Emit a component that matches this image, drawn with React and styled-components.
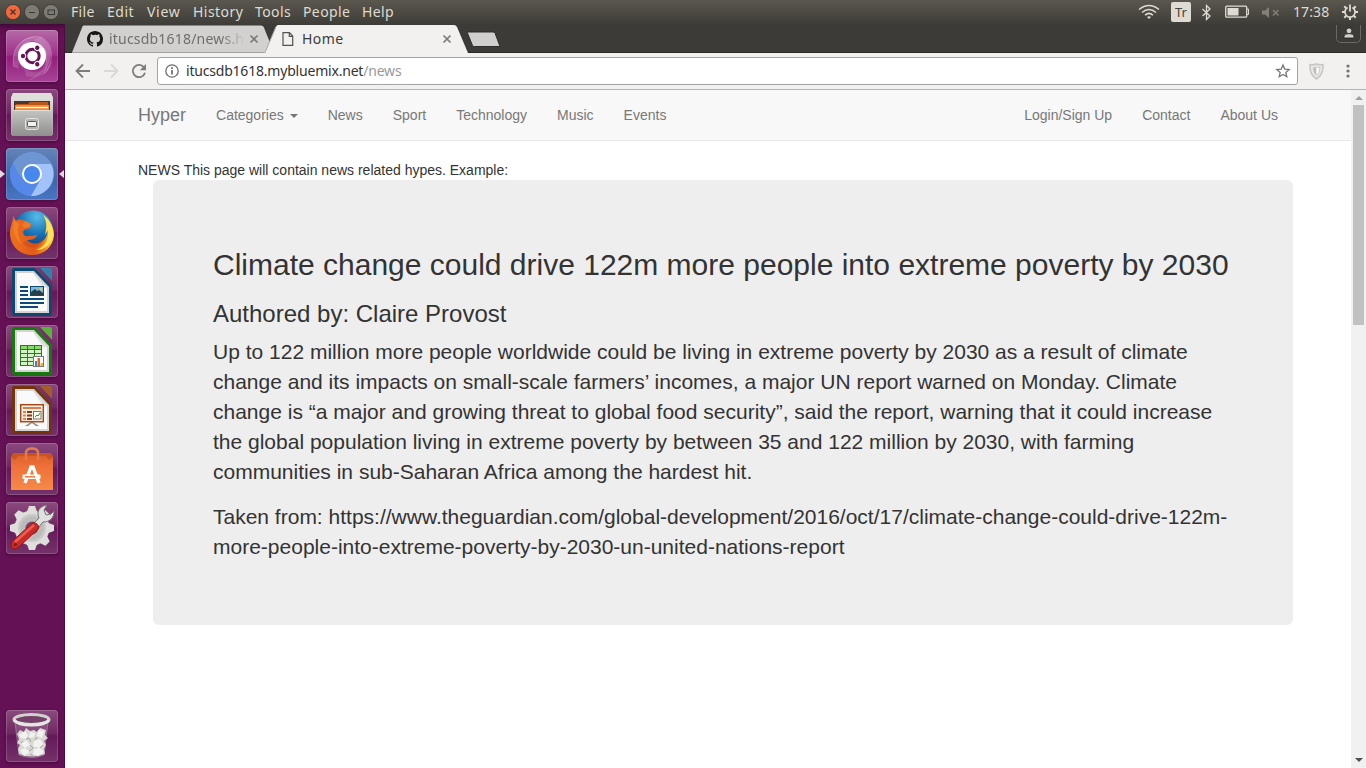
import React from "react";
import styled, { createGlobalStyle } from "styled-components";

const GlobalStyle = createGlobalStyle`
  *, *::before, *::after { box-sizing: border-box; }
  html, body { margin: 0; padding: 0; }
  body { width: 1366px; height: 768px; overflow: hidden; background: #fff; }
  svg { display: block; flex: none; }
`;

const uiFont = `"Noto Sans", "Open Sans", sans-serif`;

const Desktop = styled.div`
  width: 1366px;
  height: 768px;
  display: flex;
  flex-direction: column;
  font-family: ${uiFont};
`;

/* ---------- top panel ---------- */

const Panel = styled.header`
  height: 24px;
  flex: none;
  display: flex;
  align-items: center;
  background: linear-gradient(#5a574e, #3e3d38);
  color: #dfdbd2;
`;

const WindowButtons = styled.div`
  display: flex;
  gap: 3px;
  padding: 0 12px 1px 5px;
`;

const MenuItem = styled.span`
  flex: none;
  width: ${(p) => p.$w}px;
  font-size: 14px;
  line-height: 24px;
  letter-spacing: ${(p) => p.$ls}px;
  white-space: nowrap;
`;

const Indicators = styled.div`
  margin-left: auto;
  height: 24px;
  display: flex;
  align-items: center;
  padding-right: 7px;
`;

const BatteryIcon = styled.svg`
  margin-left: 13px;
`;

const SoundIcon = styled.svg`
  margin-left: 11px;
`;

const Keyboard = styled.span`
  width: 20px;
  height: 20px;
  margin: 0 10px 0 11px;
  border-radius: 2px;
  background: #dfdbd2;
  color: #45433e;
  font-size: 13px;
  line-height: 20px;
  text-align: center;
`;

const Clock = styled.span`
  width: 37px;
  margin: 0 11px 0 13px;
  font-size: 14px;
  line-height: 24px;
  letter-spacing: 0.1px;
  white-space: nowrap;
`;

/* ---------- launcher ---------- */

const Body = styled.div`
  flex: 1;
  min-height: 0;
  display: flex;
`;

const Launcher = styled.aside`
  width: 65px;
  flex: none;
  display: flex;
  flex-direction: column;
  gap: 7px;
  padding: 6px 0 6px 6px;
  border-right: 1px solid #4c0b40;
  background: linear-gradient(#430839 0, #5c0f4e 5px, #651155 14px, #651155 100%);
`;

const Tile = styled.div`
  position: relative;
  width: 52px;
  height: 52px;
  flex: none;
  margin-top: ${(p) => (p.$last ? "auto" : "0")};
  border-radius: 4px;
  background: ${(p) => p.$bg || "linear-gradient(#8a4a7e, #6f2862 45%, #64185a 50%, #74336a)"};
  box-shadow: inset 0 0 0 1px rgba(255, 255, 255, 0.17), 0 1px 3px rgba(30, 0, 25, 0.45);
`;

const RunningMark = styled.i`
  position: absolute;
  top: 22px;
  ${(p) => (p.$right ? "right: -6px;" : "left: -6px;")}
  border: 4px solid transparent;
  border-width: 4px ${(p) => (p.$right ? "5px 4px 0" : "0 4px 5px")};
  ${(p) => (p.$right ? "border-right-color" : "border-left-color")}: #e4d9e0;
`;

/* ---------- browser chrome ---------- */

const Browser = styled.main`
  flex: 1;
  min-width: 0;
  display: flex;
  flex-direction: column;
`;

const TabStrip = styled.div`
  height: 29px;
  flex: none;
  display: flex;
  padding: 1px 5px 0 7px;
  background: #3c3b37;
  border-bottom: 1px solid #2c2b28;
`;

const Tab = styled.div`
  position: relative;
  width: 203px;
  height: 28px;
  flex: none;
  display: flex;
  align-items: center;
  padding: 0 16px 0 ${(p) => (p.$active ? 17 : 15)}px;
  margin-left: ${(p) => (p.$active ? -10 : 0)}px;
  z-index: ${(p) => (p.$active ? 2 : 1)};
  color: ${(p) => (p.$active ? "#3c3b37" : "#6e6d6a")};
  > * { position: relative; }
`;

const TabShape = styled.svg`
  && { position: absolute; left: 0; top: 0; }
`;

const TabTitle = styled.span`
  width: ${(p) => p.$w}px;
  margin-left: ${(p) => p.$gap}px;
  font-size: 14px;
  line-height: 26px;
  letter-spacing: ${(p) => p.$ls}px;
  white-space: nowrap;
  ${(p) => p.$fade && "mask-image: linear-gradient(90deg, #000 82%, transparent);"}
`;

const CloseIcon = styled.svg`
  margin-left: auto;
`;

const NewTab = styled.svg`
  margin: 6px 0 0 -2px;
`;

const Profile = styled.div`
  width: 25px;
  height: 18px;
  margin-left: auto;
  border: 1px solid #6a6962;
  border-top: 0;
  border-radius: 0 0 5px 5px;
  display: flex;
  justify-content: center;
  padding-top: 2px;
`;

const Toolbar = styled.div`
  height: 37px;
  flex: none;
  display: flex;
  align-items: center;
  padding: 0 8px 0 10px;
  background: #f2f1f0;
  border-bottom: 1px solid #b5b4b3;
`;

const ToolIcons = styled.div`
  display: flex;
  gap: 12px;
`;

const AddressBar = styled.div`
  width: 1141px;
  height: 28px;
  margin: 0 11px 0 10px;
  display: flex;
  align-items: center;
  padding: 0 6px 0 7px;
  background: #fff;
  border: 1px solid #a5a4a3;
  border-radius: 3px;
`;

const Url = styled.span`
  flex: 1;
  margin-left: 7px;
  color: #333;
  font-size: 14px;
  line-height: 24px;
  letter-spacing: -0.2px;
  span { color: #999; }
`;

const MenuDots = styled.svg`
  margin: 0 8px 0 auto;
`;

/* ---------- web page ---------- */

const Viewport = styled.div`
  flex: 1;
  min-height: 0;
  display: flex;
  background: #fff;
`;

const Page = styled.div`
  flex: 1;
  font-family: "Liberation Sans", Arial, sans-serif;
  font-size: 14px;
  line-height: 20px;
  color: #333;
`;

const Navbar = styled.nav`
  height: 51px;
  margin-bottom: 19px;
  background: #f8f8f8;
  border-bottom: 1px solid #e7e7e7;
`;

const Container = styled.div`
  width: 1170px;
  margin: 0 auto;
  padding: 0 15px;
`;

const NavRow = styled(Container)`
  display: flex;
`;

const NavLink = styled.a`
  display: flex;
  align-items: center;
  padding: 15px;
  color: #777;
  font-size: ${(p) => (p.$brand ? 18 : 14)}px;
  line-height: 20px;
  margin-left: ${(p) => (p.$brand ? -15 : 0)}px;
  white-space: nowrap;
`;

const NavRight = styled.div`
  display: flex;
  margin: 0 -15px 0 auto;
`;

const Caret = styled.b`
  margin: 1px 0 0 6px;
  border-top: 4px solid #777;
  border-left: 4px solid transparent;
  border-right: 4px solid transparent;
`;

const Jumbotron = styled.section`
  width: 1140px;
  margin-left: 15px;
  padding: 48px 60px;
  border-radius: 6px;
  background: #eee;
`;

const Headline = styled.h2`
  margin: 20px 0;
  font-size: 30px;
  line-height: 33px;
  font-weight: 400;
  white-space: nowrap;
`;

const Author = styled.h3`
  margin: 20px 0 10px;
  font-size: 24px;
  line-height: 26px;
  font-weight: 400;
`;

const Paragraph = styled.p`
  margin: 0 0 15px;
  font-size: 21px;
  line-height: 30px;
  font-weight: 400;
`;

const Scrollbar = styled.div`
  width: 15px;
  flex: none;
  display: flex;
  flex-direction: column;
  align-items: center;
  padding: 6px 0;
  background: #f1f1f1;
`;

const Arrow = styled.i`
  border: 4px solid transparent;
  ${(p) => (p.$up ? "border-bottom-color: #a0a0a0; border-top: 0;" : "border-top-color: #505050; border-bottom: 0; margin-top: auto;")}
`;

const Thumb = styled.div`
  width: 11px;
  height: 220px;
  margin-top: 5px;
  background: #c1c1c1;
`;

/* ---------- launcher artwork ---------- */

const Svg52 = ({ children }) => (
  <svg width="52" height="52" viewBox="0 0 52 52">{children}</svg>
);

const DashIcon = () => (
  <Svg52>
    <path d="M8 37C4 13 22 4 34 7C22 9 11 15 13 39Z" fill="#fff" opacity=".16" />
    <path d="M34 7C47 13 49 30 37 43C43 30 41 16 26 10Z" fill="#fff" opacity=".24" />
    <path d="M18 38C28 46 40 42 46 30C46 43 32 50 20 46Z" fill="#fff" opacity=".12" />
    <path d="M8 37C4 17 18 5 34 7C49 12 48 34 38 44" fill="none" stroke="#fff" strokeOpacity=".25" />
    <path d="M17 39C8 28 12 12 27 10M38 18C44 28 40 42 24 50" fill="none" stroke="#fff" strokeOpacity=".18" />
    <circle cx="26" cy="26" r="14" fill="#fff" />
    <circle cx="26.5" cy="26" r="6.7" fill="none" stroke="#6b1359" strokeWidth="3" />
    {[60, 180, 300].map((a) => (
      <g key={a} transform={`rotate(${a} 26.5 26)`}>
        <circle cx="36" cy="26" r="3.2" fill="#fff" />
        <circle cx="36" cy="26" r="2.2" fill="#6b1359" />
      </g>
    ))}
  </Svg52>
);

const FilesIcon = () => (
  <Svg52>
    <defs>
      <linearGradient id="cab" x2="0" y2="1"><stop stopColor="#e8e8e6" /><stop offset="1" stopColor="#999" /></linearGradient>
      <linearGradient id="drawer" x2="0" y2="1"><stop stopColor="#c5c5c3" /><stop offset="1" stopColor="#8e8e8c" /></linearGradient>
    </defs>
    <path d="M7 4H45L47 9V46H5V9Z" fill="url(#cab)" />
    <path d="M7 4H45L47 9H5Z" fill="#dededb" />
    <path d="M8 12H44V24H8Z" fill="#4b3630" />
    <path d="M10 15H22L24 13H42V24H10Z" fill="#bd5918" />
    <path d="M9 16H43V24H9Z" fill="#f28a32" />
    <path d="M10 18.5H42" stroke="#fff1dc" strokeWidth="1.4" />
    <path d="M7 21H45L46 47H6Z" fill="url(#drawer)" />
    <path d="M7 21.5H45" stroke="#dfdfdd" />
    <rect x="19.5" y="29.5" width="13" height="11" rx="2" fill="#b2b2b0" stroke="#e2e2e0" />
    <rect x="21.5" y="32.5" width="9" height="5" rx="1" fill="#f2f2f0" stroke="#555" />
  </Svg52>
);

const ChromiumIcon = () => (
  <Svg52>
    <circle cx="26" cy="26" r="22" fill="#6f9be0" />
    <path d="M7 15A22 22 0 0 0 25 48L34.5 31H17Z" fill="#5588e8" />
    <path d="M25 48A22 22 0 0 0 45 16H26L35 31Z" fill="#a1c2fa" />
    <path d="M7 15A22 22 0 0 1 45 16H26Q18 16 16 25L13 27Z" fill="#6c95d2" />
    <circle cx="26" cy="26" r="10" fill="#fff" />
    <circle cx="26" cy="26" r="8" fill="#4788ed" />
  </Svg52>
);

const FirefoxIcon = () => (
  <Svg52>
    <defs>
      <radialGradient id="globe" cx=".6" cy=".15" r=".9"><stop stopColor="#56bde9" /><stop offset=".5" stopColor="#176eb2" /><stop offset="1" stopColor="#0a2d68" /></radialGradient>
      <linearGradient id="fox" x2="1"><stop stopColor="#ee6f1e" /><stop offset=".55" stopColor="#e35b1b" /><stop offset=".8" stopColor="#f28c1c" /><stop offset="1" stopColor="#ffe34b" /></linearGradient>
    </defs>
    <circle cx="27" cy="24" r="20.5" fill="url(#globe)" />
    <path d="M7 9L10 14C13 11 17 13 19 14L25 17L24 21L18 23C16 26 18 30 22 29L31 28C30 32 26 33 21 33C28 40 37 36 40 30C42 26 42 21 40 16L43 20C43 15 40 12 37 8C44 12 48 21 48 28C47 41 37 48 26 48C13 48 4 38 4 26C4 19 7 16 7 9Z" fill="url(#fox)" />
    <path d="M8 13C6 22 8 31 16 38C12 29 11 24 13 17Z" fill="#f6a330" opacity=".4" />
    <path d="M37 8C45 13 49 23 46 32C43 40 36 43 30 43C40 40 43 31 42 23L39 28C41 20 41 14 37 8Z" fill="#ffe15a" />
    <path d="M19 14L25 16.5L24 20L18 21L16 18Z" fill="#ec7a2c" />
    <path d="M21 33C26 39 34 37 38 31C36 42 24 44 17 36Z" fill="#c9461a" opacity=".5" />
  </Svg52>
);

const OfficeDoc = ({ dark, light, children }) => (
  <Svg52>
    <path d="M8 2H29L46 20V47Q46 50 43 50H9Q6 50 6 47V4Q6 2 8 2Z" fill={dark} />
    <path d="M34 2H44Q46 2 46 4V15Z" fill={light} />
    <path d="M30 2L46 19V15L34 2Z" fill="#5a2150" opacity=".35" />
    <path d="M9 5H28L43 21V47H9Z" fill="#d3d3d3" />
    <path d="M11 7H27L41 22V45H11Z" fill="#fafafa" />
    <path d="M27 7L41 22H37Z" fill="#e2e2e2" />
    {children}
  </Svg52>
);

const WriterIcon = () => (
  <OfficeDoc dark="#0c4870" light="#3480ad">
    <g stroke="#0d4b74" strokeWidth="2">
      <path d="M14 21H22M14 25H22M14 29H22M14 33H38M14 37H38M14 41H32" />
    </g>
    <rect x="24.5" y="20.5" width="13" height="9" fill="#7dbade" stroke="#0d4b74" />
    <path d="M25 29V26L29 23L31 25L33 24L37 27V29Z" fill="#293f48" />
    <circle cx="35" cy="23" r="1.3" fill="#f1c642" />
  </OfficeDoc>
);

const CalcIcon = () => (
  <OfficeDoc dark="#16790e" light="#58b439">
    <rect x="14" y="20" width="22" height="21" fill="#237f1c" />
    {[0, 1, 2, 3, 4].map((r) =>
      [0, 1, 2].map((c) => (
        <rect key={`${r}${c}`} x={15 + c * 7} y={21 + r * 4} width="6" height="3" fill={r ? "#d4f5c3" : "#8bd870"} />
      ))
    )}
    <rect x="27.5" y="31.5" width="10" height="10" fill="#fff" stroke="#777" />
    <path d="M29 36H31V41H29Z" fill="#3787cc" />
    <path d="M31.5 33H34V41H31.5Z" fill="#e6651d" />
    <path d="M34.5 38H37V41H34.5Z" fill="#edb62c" />
  </OfficeDoc>
);

const ImpressIcon = () => (
  <OfficeDoc dark="#74340b" light="#a45d2a">
    <path d="M25 38L19 42H22L26 39L30 42H33L27 38Z" fill="#888" />
    <rect x="14.7" y="20.7" width="22.6" height="17" fill="#fff0e5" stroke="#a54a14" strokeWidth="1.5" />
    <path d="M17 24H35" stroke="#dc7e4b" strokeWidth="2" />
    <path d="M17 28H20M17 31.5H20M17 35H20" stroke="#e68049" strokeWidth="2" />
    <path d="M21 28H26M21 31.5H26M21 35H26" stroke="#8d370e" strokeWidth="2" />
    <rect x="27.5" y="27.5" width="7.5" height="7.5" fill="#f5fff0" stroke="#777" />
    <path d="M29 33L31 31L32 32L34 29" fill="none" stroke="#279936" />
  </OfficeDoc>
);

const SoftwareIcon = () => (
  <Svg52>
    <defs><linearGradient id="bag" x2="0" y2="1"><stop stopColor="#d95e26" /><stop offset=".35" stopColor="#ef7038" /><stop offset="1" stopColor="#f48a48" /></linearGradient></defs>
    <path d="M7 10H45L47 14V47H5V14Z" fill="url(#bag)" />
    <path d="M7 10H45L47 14L43 17L40 13H12L9 17L5 14Z" fill="#c34f22" opacity=".75" />
    <path d="M20 17V10Q20 5.5 26 5.5Q32 5.5 32 10V17" fill="none" stroke="#dd7c51" strokeWidth="2.5" />
    <path d="M19 40L25 24H27L33 40" fill="none" stroke="#fff" strokeWidth="3.4" />
    <rect x="16.5" y="31.5" width="18" height="4.5" rx="1" fill="#fff" />
    <path d="M19 33.8H29" stroke="#e96d34" strokeWidth="1.4" />
  </Svg52>
);

const SettingsIcon = () => (
  <Svg52>
    <g fill="#dededc">
      {[0, 45, 90, 135].map((a) => (
        <path key={a} transform={`rotate(${a} 26 26)`} d="M23 4H29L31.5 11V41L29 48H23L20.5 41V11Z" />
      ))}
      <circle cx="26" cy="26" r="17.5" />
    </g>
    <circle cx="26" cy="26" r="14" fill="#c9c9c7" />
    <circle cx="26" cy="26" r="11.5" fill="#bcbcba" />
    <circle cx="26" cy="26" r="6.5" fill="#7c4571" />
    <path d="M26 23L33 16C30 9 34 4 41 3L38 8L40 13L45 12L48 9C48 16 44 20 37 20L31 27Z" fill="#e0e0de" stroke="#737371" />
    <path d="M6.5 39L27 20.5Q32 21 33 26L13 45Q8 49 5.5 45Q4 42 6.5 39Z" fill="#cb2b27" stroke="#8e1713" />
    <path d="M9 40L28 23" stroke="#ec5e55" strokeWidth="2.5" />
    <circle cx="9.5" cy="42.5" r="1.6" fill="#7d1c16" />
  </Svg52>
);

const TrashIcon = () => (
  <Svg52>
    <path d="M9 12L13 45Q26 50 38 45L42 12Z" fill="#a684a2" fillOpacity=".35" stroke="#b59cb1" strokeOpacity=".55" />
    <path d="M11 24L14 20L18 22L20 18L24 21L28 20L31 22L34 18L40 20L39 25L42 28L38 31L40 35L38 39L39 44Q26 49 13 44L12 39L14 35L11 33L13 29Z" fill="#d8d8d4" />
    <path d="M13 25L19 21L22 25L20 29L15 28ZM24 22L29 23L28 27L23 28ZM32 20L38 21L36 28L31 26ZM15 34L20 30L24 35L19 38ZM28 31L34 29L37 34L33 38L27 36ZM14 40L19 38L24 42L18 46ZM28 39L34 38L38 42L32 46L27 44Z" fill="#f2f2ef" />
    <path d="M20 29L23 28L25 32M31 27L29 30M24 35L27 38L23 41M37 35L34 38M17 31L15 33M24 44L27 46" fill="none" stroke="#a3a49e" />
    <ellipse cx="25.5" cy="9.5" rx="17.5" ry="5" fill="#744069" stroke="#d1d2ce" strokeWidth="3" />
    <path d="M8 10Q12 15 25.5 15Q39 15 43 10" fill="none" stroke="#e6e6e3" strokeWidth="3" />
  </Svg52>
);

const launcherApps = [
  { key: "dash", Icon: DashIcon, bg: "linear-gradient(#b46ba6, #a02f8c 48%, #941d7d 52%, #a74497)" },
  { key: "files", Icon: FilesIcon },
  { key: "chromium", Icon: ChromiumIcon, bg: "linear-gradient(#6384b7, #456eae 45%, #3b67ac 60%, #4876c3)", running: true },
  { key: "firefox", Icon: FirefoxIcon },
  { key: "writer", Icon: WriterIcon },
  { key: "calc", Icon: CalcIcon },
  { key: "impress", Icon: ImpressIcon },
  { key: "software", Icon: SoftwareIcon },
  { key: "settings", Icon: SettingsIcon },
  { key: "trash", Icon: TrashIcon, last: true },
];

const menus = [
  ["File", 36, 0.3], ["Edit", 40, 0.5], ["View", 46, 0.7], ["History", 62, 0.45],
  ["Tools", 48, 0.4], ["People", 59, 0.4], ["Help", 40, 0.4],
];

const TabClose = () => (
  <CloseIcon width="10" height="10" viewBox="0 0 10 10">
    <path d="M1.5 1.5L8.5 8.5M8.5 1.5L1.5 8.5" stroke="#7b7a78" strokeWidth="1.7" />
  </CloseIcon>
);

function TopPanel() {
  return (
    <Panel>
      <WindowButtons>
        {["close", "min", "max"].map((k) => (
          <svg key={k} width="16" height="16" viewBox="0 0 16 16">
            <circle cx="8" cy="8" r="7.6" fill={k === "close" ? "#f0683e" : "#7d7b73"} stroke="#393732" strokeWidth=".8" />
            {k === "close" && <path d="M5.5 5.5L10.5 10.5M10.5 5.5L5.5 10.5" stroke="#43302a" strokeWidth="1.2" />}
            {k === "min" && <path d="M5 8.5H11" stroke="#3b3934" />}
            {k === "max" && <rect x="5" y="6" width="6.5" height="4.5" fill="none" stroke="#3b3934" />}
          </svg>
        ))}
      </WindowButtons>
      {menus.map(([t, w, ls]) => <MenuItem key={t} $w={w} $ls={ls}>{t}</MenuItem>)}
      <Indicators>
        <svg width="22" height="16" viewBox="0 0 22 16" fill="none" stroke="#dfdbd2" strokeWidth="1.5">
          <path d="M1 5.5Q11 -2.5 21 5.5M4 8.5Q11 2.5 18 8.5M7 11.3Q11 7.5 15 11.3" />
          <path d="M9 13Q11 11.7 13 13L11 15Z" fill="#dfdbd2" stroke="none" />
        </svg>
        <Keyboard>Tr</Keyboard>
        <svg width="11" height="17" viewBox="0 0 11 17" fill="none" stroke="#dfdbd2" strokeWidth="1.3">
          <path d="M1.5 5L9 12L5.5 15.5V1.5L9 5L1.5 12" />
        </svg>
        <BatteryIcon width="25" height="14" viewBox="0 0 25 14">
          <rect x=".7" y="1.2" width="21" height="11" rx="1" fill="none" stroke="#dfdbd2" strokeWidth="1.3" />
          <rect x="2.5" y="3" width="11" height="7.5" fill="#dfdbd2" />
          <path d="M22 4H23.5V9.5H22" fill="none" stroke="#dfdbd2" />
        </BatteryIcon>
        <SoundIcon width="19" height="13" viewBox="0 0 19 13">
          <path d="M1 4.5H4L8 1V12L4 8.5H1Z" fill="#817f76" />
          <path d="M12 4L17.5 9.5M17.5 4L12 9.5" stroke="#817f76" strokeWidth="1.6" />
        </SoundIcon>
        <Clock>17:38</Clock>
        <svg width="18" height="18" viewBox="0 0 18 18" fill="none" stroke="#dfdbd2">
          <path d="M6.6 4.5A5.1 5.1 0 1 0 11.4 4.5" strokeWidth="1.7" />
          <path d="M9 1.5V8.5" strokeWidth="1.8" />
          <path d="M9 14V17M1 9H4M14 9H17M3.3 3.3L5.2 5.2M12.8 5.2L14.7 3.3M3.3 14.7L5.2 12.8M12.8 12.8L14.7 14.7" strokeWidth="2" />
        </svg>
      </Indicators>
    </Panel>
  );
}

function Chrome() {
  return (
    <>
      <TabStrip>
        <Tab>
          <TabShape width="203" height="28" viewBox="0 0 203 28">
            <path d="M0 27.5L10.5 1.5Q11 .5 12 .5H189Q191 .5 191.7 2L202 27.5Z" fill="#d2d1d0" />
            <path d="M0 27.5H203" stroke="#a3a29f" />
          </TabShape>
          <svg width="16" height="16" viewBox="0 0 16 16">
            <path fill="#181717" d="M8 0C3.58 0 0 3.58 0 8c0 3.54 2.29 6.53 5.47 7.59.4.07.55-.17.55-.38v-1.49c-2.23.48-2.7-.95-2.7-.95-.36-.92-.89-1.17-.89-1.17-.73-.5.05-.49.05-.49.81.06 1.23.83 1.23.83.72 1.23 1.87.87 2.33.66.07-.52.28-.87.51-1.07-1.78-.2-3.64-.89-3.64-3.95 0-.87.31-1.59.82-2.15-.08-.2-.36-1.02.08-2.12 0 0 .67-.21 2.2.82A7.6 7.6 0 0 1 8 3.87c.68 0 1.36.09 2 .26 1.53-1.04 2.2-.82 2.2-.82.44 1.1.16 1.92.08 2.12.51.56.82 1.27.82 2.15 0 3.07-1.87 3.75-3.65 3.95.29.25.54.73.54 1.48v2.2c0 .21.15.46.55.38A8 8 0 0 0 16 8c0-4.42-3.58-8-8-8Z" />
          </svg>
          <TabTitle $w={136} $gap={6} $ls={0.2} $fade>itucsdb1618/news.h</TabTitle>
          <TabClose />
        </Tab>
        <Tab $active>
          <TabShape width="203" height="29" viewBox="0 0 203 29">
            <path d="M0 28L11 2Q11.6 0 13 0H189Q191 0 192 2L203 28V29H0Z" fill="#f2f1f0" />
            <path d="M0 27.5L11 1.5" stroke="#aaa9a6" />
          </TabShape>
          <svg width="12" height="14" viewBox="0 0 12 14" fill="none" stroke="#53524f" strokeWidth="1.2">
            <path d="M1 .7H7.5L10.7 4V13.3H1ZM7.3 1V4.3H10.5" />
          </svg>
          <TabTitle $w={90} $gap={8} $ls={0.45}>Home</TabTitle>
          <TabClose />
        </Tab>
        <NewTab width="36" height="18" viewBox="0 0 36 18">
          <path d="M1 1H27Q28.5 1 29 2L34 15.5H8.5Q7 15.5 6.5 14.5Z" fill="#d0cfce" stroke="#2d2c29" />
        </NewTab>
        <Profile>
          <svg width="12" height="12" viewBox="0 0 12 12" fill="#d0cec8" stroke="#22211f" strokeWidth=".8"><path d="M1 11V9Q1.8 6.6 6 6.6Q10.2 6.6 11 9V11Z" /><circle cx="6" cy="3.8" r="2.9" /></svg>
        </Profile>
      </TabStrip>
      <Toolbar>
        <ToolIcons>
          <svg width="16" height="16" viewBox="0 0 16 16" fill="none" stroke="#7d7c7b" strokeWidth="1.8"><path d="M15 8H2M8 1.5L1.5 8L8 14.5" /></svg>
          <svg width="16" height="16" viewBox="0 0 16 16" fill="none" stroke="#d9d8d7" strokeWidth="1.8"><path d="M1 8H14M8 1.5L14.5 8L8 14.5" /></svg>
          <svg width="16" height="16" viewBox="0 0 16 16"><path d="M13.2 4.5A6.2 6.2 0 1 0 14 9.8" fill="none" stroke="#7d7c7b" strokeWidth="1.8" /><path d="M15 1V7.2H8.8Z" fill="#7d7c7b" /></svg>
        </ToolIcons>
        <AddressBar>
          <svg width="14" height="14" viewBox="0 0 14 14"><circle cx="7" cy="7" r="6.2" fill="none" stroke="#6d6d6d" strokeWidth="1.3" /><path d="M7 6V10.6M7 3.2V5" stroke="#5e5e5e" strokeWidth="1.6" /></svg>
          <Url>itucsdb1618.mybluemix.net<span>/news</span></Url>
          <svg width="16" height="16" viewBox="0 0 16 16"><path d="M8 1.9L9.7 6.1L14.2 6.5L10.8 9.4L11.8 13.7L8 11.4L4.2 13.7L5.2 9.4L1.8 6.5L6.3 6.1Z" fill="none" stroke="#777" strokeWidth="1.3" /></svg>
        </AddressBar>
        <svg width="15" height="17" viewBox="0 0 15 17"><path d="M7.5 1Q11 2.3 14 1.5Q14.5 12 7.5 16Q.5 12 1 1.5Q4 2.3 7.5 1Z" fill="#e9e8e7" stroke="#c7c6c5" strokeWidth="1.5" /><path d="M7.5 4L4 4.5Q4 10 7.5 13Z" fill="#bfbebd" /><path d="M7.5 4L11 4.5Q11 10 7.5 13" fill="#fafafa" stroke="#c9c8c7" /></svg>
        <MenuDots width="4" height="16" viewBox="0 0 4 16" fill="#737271"><circle cx="2" cy="3" r="1.6" /><circle cx="2" cy="8" r="1.6" /><circle cx="2" cy="13" r="1.6" /></MenuDots>
      </Toolbar>
    </>
  );
}

function NewsPage() {
  return (
    <Page>
      <Navbar>
        <NavRow>
          <NavLink $brand>Hyper</NavLink>
          <NavLink>Categories <Caret /></NavLink>
          {["News", "Sport", "Technology", "Music", "Events"].map((t) => <NavLink key={t}>{t}</NavLink>)}
          <NavRight>
            {["Login/Sign Up", "Contact", "About Us"].map((t) => <NavLink key={t}>{t}</NavLink>)}
          </NavRight>
        </NavRow>
      </Navbar>
      <Container>
        NEWS This page will contain news related hypes. Example:
        <Jumbotron>
          <Headline>Climate change could drive 122m more people into extreme poverty by 2030</Headline>
          <Author>Authored by: Claire Provost</Author>
          <Paragraph>
            Up to 122 million more people worldwide could be living in extreme poverty by 2030 as a result of climate change and its impacts on small-scale farmers’ incomes, a major UN report warned on Monday. Climate change is “a major and growing threat to global food security”, said the report, warning that it could increase the global population living in extreme poverty by between 35 and 122 million by 2030, with farming communities in sub-Saharan Africa among the hardest hit.
          </Paragraph>
          <Paragraph>
            Taken from: https://www.theguardian.com/global-development/2016/oct/17/climate-change-could-drive-122m-more-people-into-extreme-poverty-by-2030-un-united-nations-report
          </Paragraph>
        </Jumbotron>
      </Container>
    </Page>
  );
}

export default function App() {
  return (
    <Desktop>
      <GlobalStyle />
      <TopPanel />
      <Body>
        <Launcher>
          {launcherApps.map(({ key, Icon, bg, running, last }) => (
            <Tile key={key} $bg={bg} $last={last}>
              <Icon />
              {running && <RunningMark />}
              {running && <RunningMark $right />}
            </Tile>
          ))}
        </Launcher>
        <Browser>
          <Chrome />
          <Viewport>
            <NewsPage />
            <Scrollbar>
              <Arrow $up />
              <Thumb />
              <Arrow />
            </Scrollbar>
          </Viewport>
        </Browser>
      </Body>
    </Desktop>
  );
}
